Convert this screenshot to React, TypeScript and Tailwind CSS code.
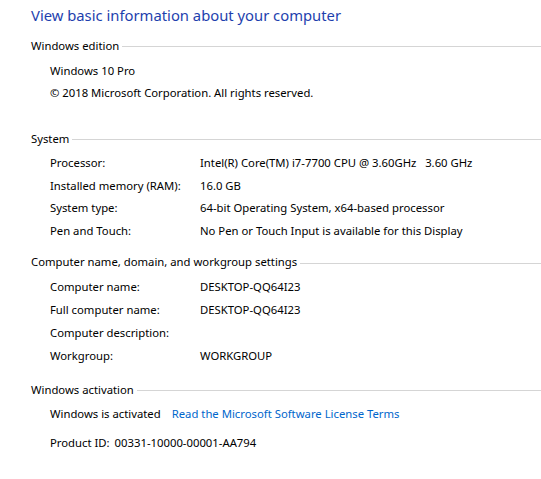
import React from 'react';

const font = { fontFamily: '"Segoe UI", "Noto Sans", "Open Sans", sans-serif' };

const SectionHeader = ({ title, className = '' }: { title: string; className?: string }) => (
  <div className={`flex items-center h-[22px] ${className}`}>
    <span className="text-[11.3px] text-black whitespace-nowrap">{title}</span>
    <div className="flex-1 h-px bg-[#d5d5d5] ml-[3px] mt-[1px]" />
  </div>
);

const Row = ({ label, value, tall = false }: { label: string; value?: string; tall?: boolean }) => (
  <div className={`flex items-center ${tall ? 'h-[23px]' : 'h-[22.5px]'} text-[11.3px] text-black`}>
    <span className="w-[150px] shrink-0">{label}</span>
    <span className="whitespace-pre">{value}</span>
  </div>
);

export default function App() {
  return (
    <div className="w-[541px] h-[479px] bg-white overflow-hidden pl-[31px]" style={font}>
      <div className="h-[22px] mt-[4px] flex items-center text-[14.8px] text-[#1e3fae] whitespace-nowrap">
        View basic information about your computer
      </div>

      {/* Windows edition */}
      <SectionHeader title="Windows edition" className="mt-[9px]" />
      <div className="pl-[19px] mt-[3px] text-[11.3px] text-black">
        <div className="h-[22px] flex items-center">Windows 10 Pro</div>
        <div className="h-[22px] flex items-center">© 2018 Microsoft Corporation. All rights reserved.</div>
      </div>

      {/* System */}
      <SectionHeader title="System" className="mt-[24px]" />
      <div className="pl-[19px] mt-[2.5px]">
        <Row label="Processor:" value="Intel(R) Core(TM) i7-7700 CPU @ 3.60GHz   3.60 GHz" />
        <Row label="Installed memory (RAM):" value="16.0 GB" />
        <Row label="System type:" value="64-bit Operating System, x64-based processor" />
        <Row label="Pen and Touch:" value="No Pen or Touch Input is available for this Display" />
      </div>

      {/* Computer name */}
      <SectionHeader title="Computer name, domain, and workgroup settings" className="mt-[9px]" />
      <div className="pl-[19px] mt-[2.5px]">
        <Row tall label="Computer name:" value="DESKTOP-QQ64I23" />
        <Row tall label="Full computer name:" value="DESKTOP-QQ64I23" />
        <Row tall label="Computer description:" />
        <Row tall label="Workgroup:" value="WORKGROUP" />
      </div>

      {/* Windows activation */}
      <SectionHeader title="Windows activation" className="mt-[11px]" />
      <div className="pl-[19px] mt-[2px] text-[11.3px] text-black">
        <div className="h-[22px] flex items-center">
          <span>Windows is activated</span>
          <a className="ml-[11px] text-[#0066cc] cursor-pointer">Read the Microsoft Software License Terms</a>
        </div>
        <div className="h-[22px] flex items-center mt-[7px]">
          <span>Product ID:</span>
          <span className="ml-[5px]">00331-10000-00001-AA794</span>
        </div>
      </div>
    </div>
  );
}
